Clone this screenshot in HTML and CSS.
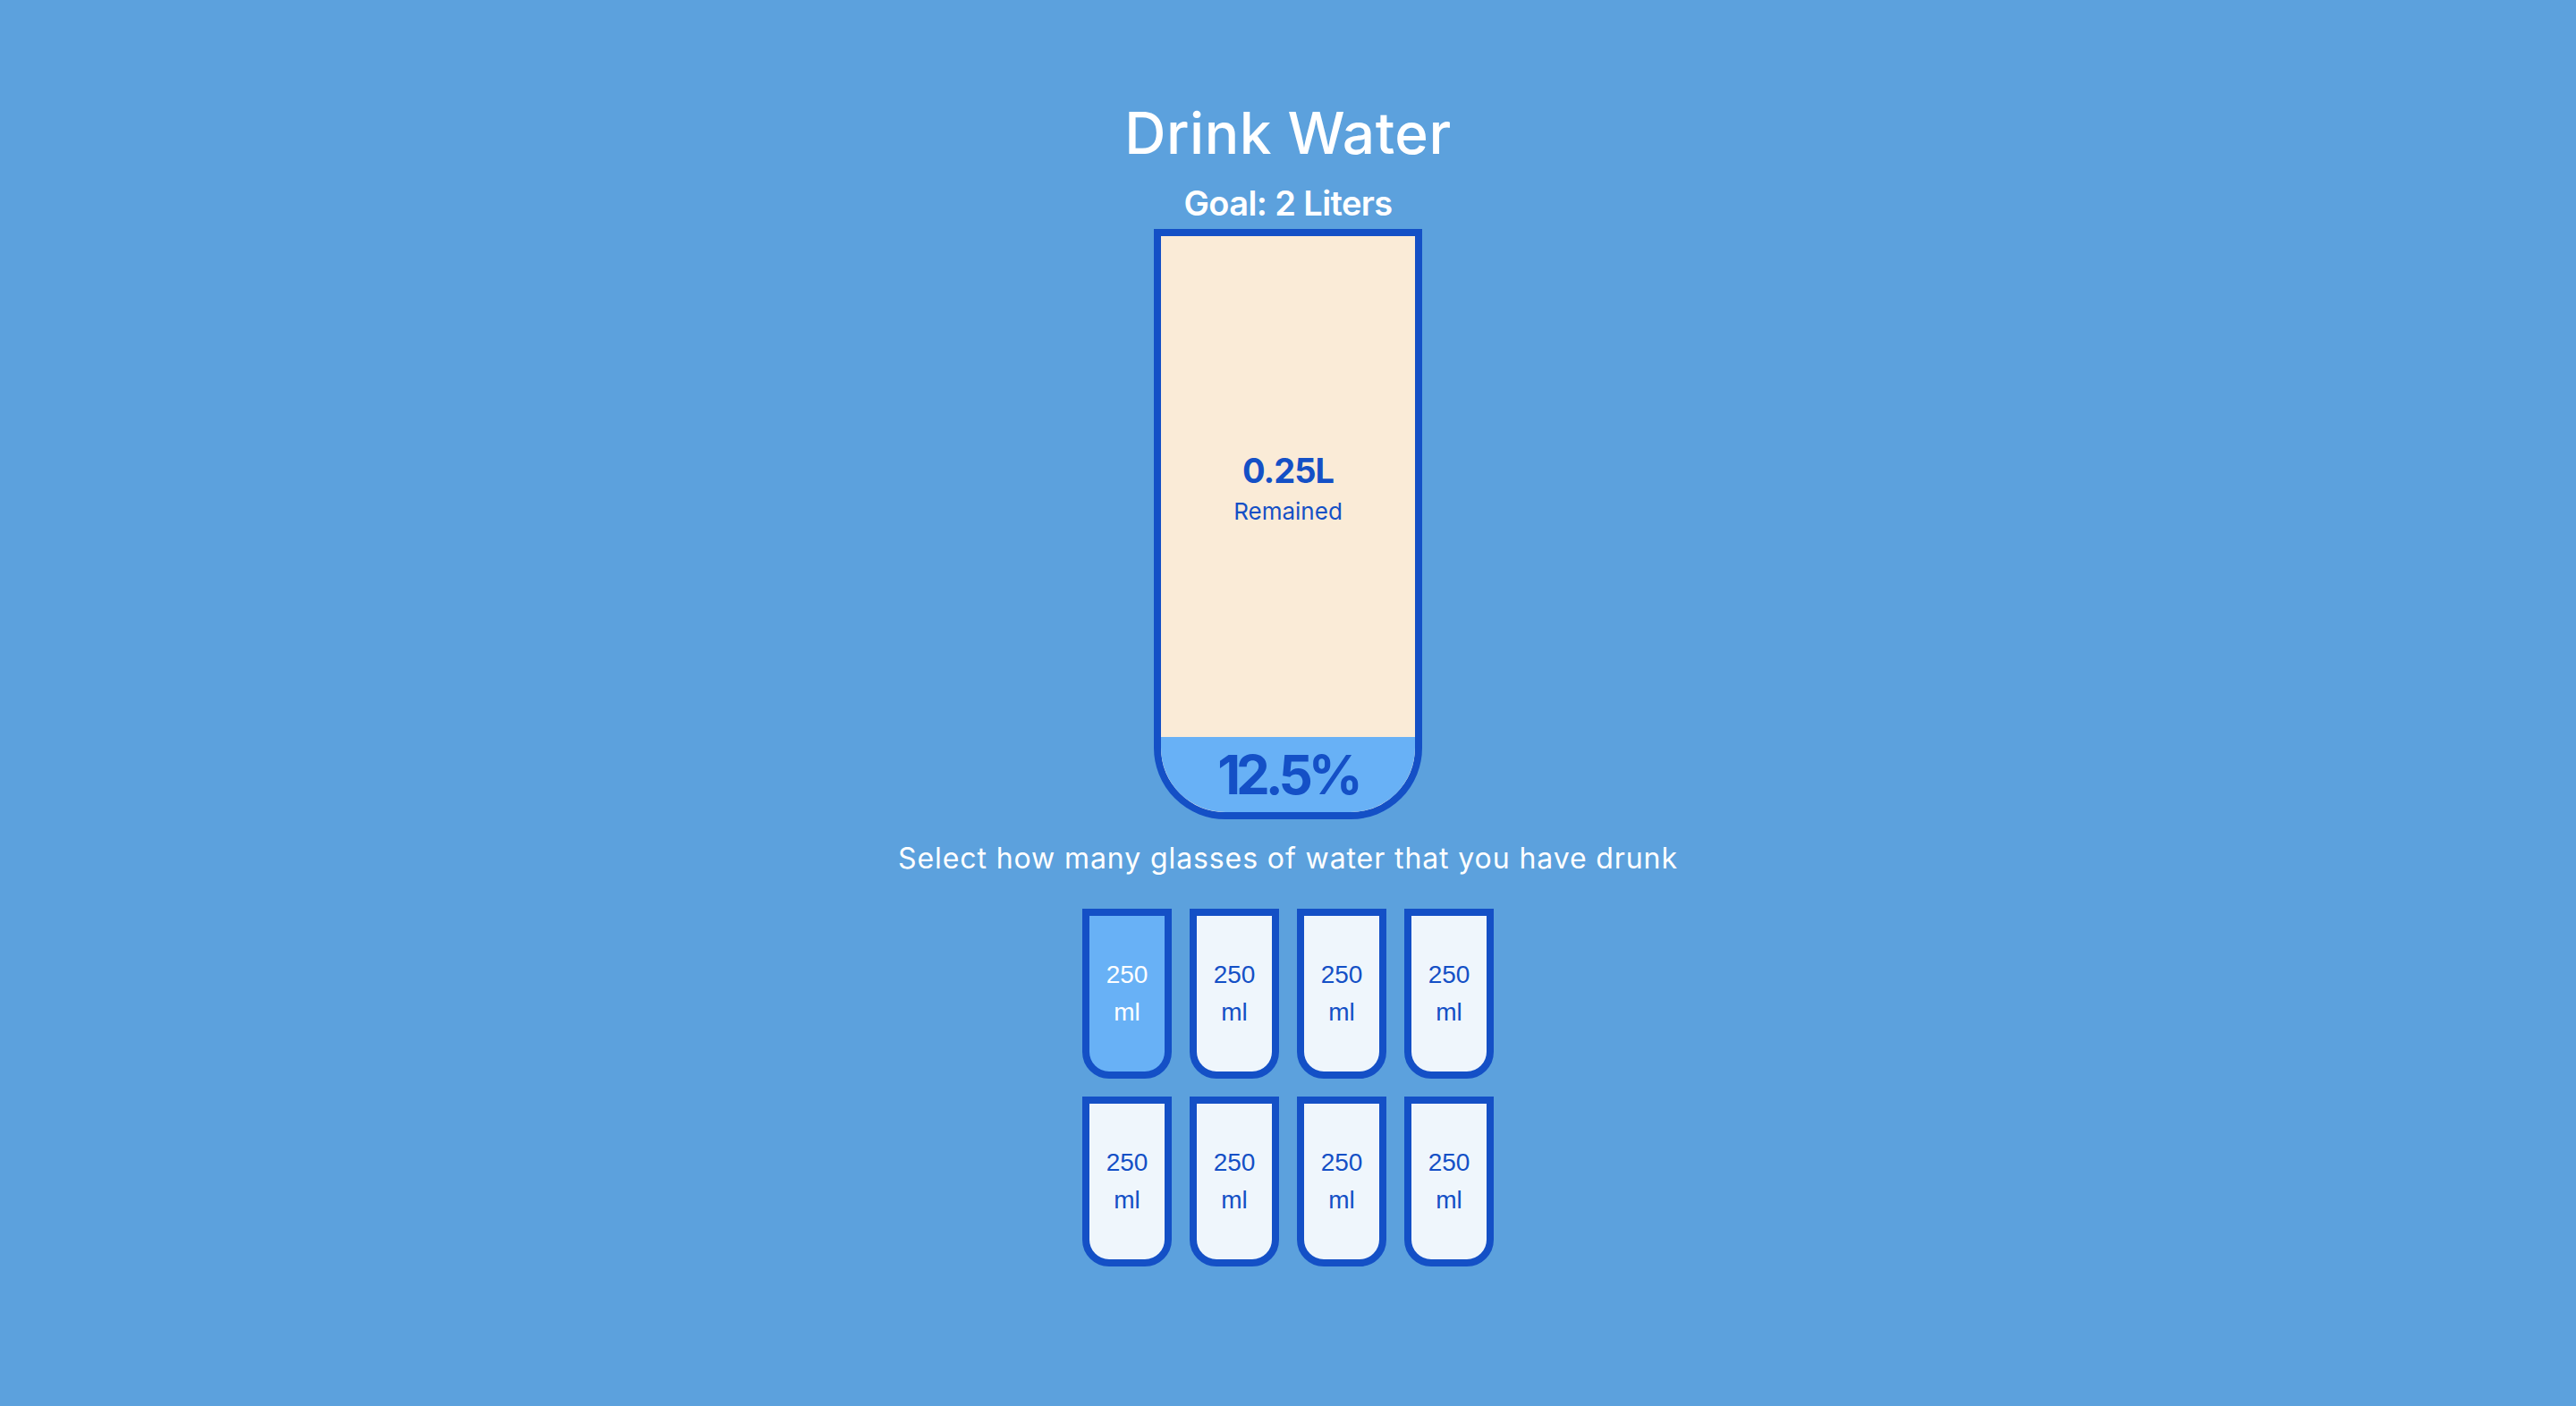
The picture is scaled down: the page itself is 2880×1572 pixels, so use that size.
FILE: index.html
```html
<!DOCTYPE html>
<html lang="en">
<head>
<meta charset="UTF-8">
<title>Drink Water</title>
<link rel="stylesheet" href="styles.css">
</head>
<body>
  <main class="app">
    <h1 class="title">Drink Water</h1>
    <h3 class="goal">Goal: 2 Liters</h3>
    <div class="cup">
      <div class="remained">
        <span class="remained-value">0.25L</span>
        <small class="remained-label">Remained</small>
      </div>
      <div class="percentage" style="height: 84px">12.5%</div>
    </div>
    <p class="text">Select how many glasses of water that you have drunk</p>
    <div class="cups">
      <div class="cup-small full">250 ml</div>
      <div class="cup-small">250 ml</div>
      <div class="cup-small">250 ml</div>
      <div class="cup-small">250 ml</div>
      <div class="cup-small">250 ml</div>
      <div class="cup-small">250 ml</div>
      <div class="cup-small">250 ml</div>
      <div class="cup-small">250 ml</div>
    </div>
  </main>
</body>
</html>
```

FILE: styles.css
```css
* { box-sizing: border-box; }

html, body {
  margin: 0;
  padding: 0;
}

body {
  background-color: #5ca1dd;
  color: #fff;
  font-family: "Inter", "Open Sans", sans-serif;
  min-height: 1572px;
}

.app {
  display: flex;
  flex-direction: column;
  align-items: center;
  padding-top: 109px;
}

.title {
  margin: 0;
  font-size: 64px;
  line-height: 80px;
  font-weight: 500;
  letter-spacing: 0.5px;
}

.goal {
  margin: 14px 0 0;
  font-size: 38px;
  line-height: 48px;
  font-weight: 600;
  letter-spacing: -0.6px;
}

.cup {
  width: 300px;
  height: 660px;
  margin-top: 5px;
  border: 8px solid #1450c6;
  border-radius: 0 0 80px 80px;
  background-color: #faebd7;
  color: #1450c6;
  display: flex;
  flex-direction: column;
  overflow: hidden;
}

.remained {
  flex: 1;
  display: flex;
  flex-direction: column;
  align-items: center;
  justify-content: center;
  text-align: center;
  padding-top: 8px;
}

.remained-value {
  font-size: 38px;
  line-height: 48px;
  font-weight: 700;
  letter-spacing: -1px;
}

.remained-label {
  font-size: 26px;
  line-height: 44px;
}

.percentage {
  background-color: #68b1f6;
  display: flex;
  align-items: center;
  justify-content: center;
  font-size: 60px;
  font-weight: 700;
  letter-spacing: -5px;
}

.text {
  margin: 20px 0 0;
  font-size: 32px;
  line-height: 48px;
  letter-spacing: 0.9px;
}

.cups {
  width: 480px;
  margin-top: 32px;
  display: flex;
  flex-wrap: wrap;
  justify-content: center;
  gap: 20px;
}

.cup-small {
  width: 100px;
  height: 190px;
  border: 8px solid #1450c6;
  border-radius: 0 0 30px 30px;
  background-color: rgba(255, 255, 255, 0.9);
  color: #1450c6;
  font-family: "Liberation Sans", Arial, sans-serif;
  font-size: 28px;
  line-height: 42px;
  padding: 0 8px;
  display: flex;
  align-items: center;
  justify-content: center;
  text-align: center;
}

.cup-small.full {
  background-color: #68b1f6;
  color: #fff;
}
```
